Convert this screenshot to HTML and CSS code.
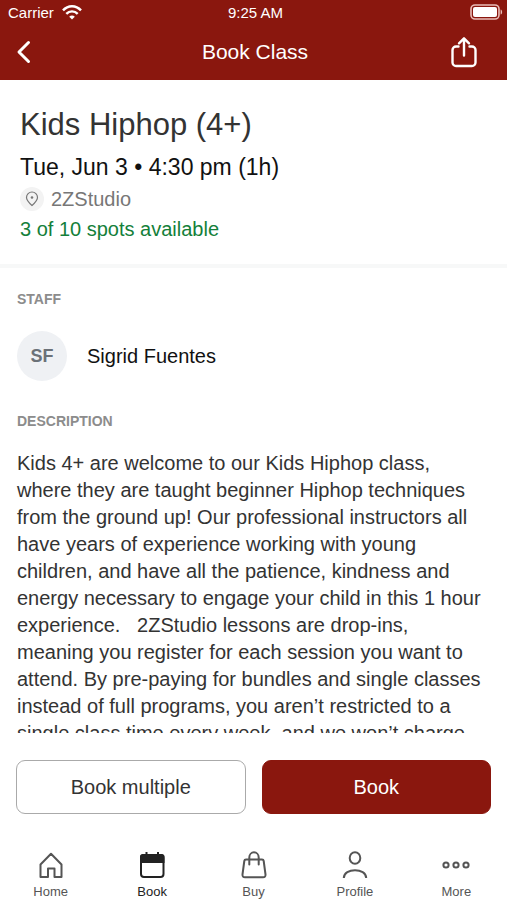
FILE: index.html
```html
<!DOCTYPE html>
<html lang="en">
<head>
  <meta charset="UTF-8">
  <meta name="viewport" content="width=device-width, initial-scale=1.0">
  <title>Book Class</title>
  <link rel="stylesheet" href="styles.css">
</head>
<body>

  <header class="header">
    <div class="status-bar">
      <div class="carrier">
        <span>Carrier</span>
        <svg width="20" height="15" viewBox="0 0 20 15" fill="none" stroke="#fff" stroke-width="2.4" aria-hidden="true">
          <path d="M1 5.4C6-.2 14-.2 19 5.4"/>
          <path d="M4.3 8.9c3.2-3.4 8.2-3.4 11.4 0"/>
          <path d="M10 14.6l-2.8-2.9c1.6-1.5 4-1.5 5.6 0z" fill="#fff" stroke="none"/>
        </svg>
      </div>
      <span class="time">9:25 AM</span>
      <svg class="battery" width="33" height="16" viewBox="0 0 33 16" aria-hidden="true">
        <rect x="1" y="1" width="28" height="14" rx="4" fill="none" stroke="#e9bdb8" stroke-width="1.6"/>
        <rect x="3" y="3" width="24" height="10" rx="2" fill="#fff"/>
        <path d="M30.6 5.4c2 .6 2 4.6 0 5.2z" fill="#e9bdb8"/>
      </svg>
    </div>
    <div class="nav-bar">
      <button type="button" class="icon-button" aria-label="Back">
        <svg width="16" height="24" viewBox="0 0 16 24" fill="none" stroke="#fff" stroke-width="3" stroke-linecap="round" stroke-linejoin="round"><path d="M12.5 2.5L3 12l9.500 9.500"/></svg>
      </button>
      <h1 class="nav-title">Book Class</h1>
      <button type="button" class="icon-button share" aria-label="Share">
        <svg width="28" height="32" viewBox="0 0 28 32" fill="none" stroke="#fff" stroke-width="2.4" stroke-linecap="round" stroke-linejoin="round">
          <path d="M8.500 10.500H6a3.500 3.500 0 0 0-3.500 3.500v12.500A3.500 3.500 0 0 0 6 30h16a3.500 3.500 0 0 0 3.500-3.500V14a3.500 3.500 0 0 0-3.500-3.500h-2.500"/>
          <path d="M14 19.500V2.500M9 7.300l5-5 5 5"/>
        </svg>
      </button>
    </div>
  </header>

  <main class="content">
    <section class="summary">
      <h2 class="class-name">Kids Hiphop (4+)</h2>
      <p class="class-time">Tue, Jun 3 • 4:30 pm (1h)</p>
      <p class="location">
        <span class="pin">
          <svg width="14" height="16" viewBox="0 0 14 16" fill="none" stroke="#777" stroke-width="1.2" aria-hidden="true">
            <path d="M7 14.500C4.200 12 1.500 9.300 1.500 6.500a5.500 5.500 0 0 1 11 0c0 2.800-2.700 5.500-5.500 8z"/>
            <circle cx="7" cy="6.500" r="1.300" fill="#777" stroke="none"/>
          </svg>
        </span>
        2ZStudio
      </p>
      <p class="spots">3 of 10 spots available</p>
    </section>

    <section class="details">
      <h3 class="section-title">STAFF</h3>
      <div class="staff">
        <span class="avatar">SF</span>
        <span>Sigrid Fuentes</span>
      </div>
      <h3 class="section-title">DESCRIPTION</h3>
      <p class="description">Kids 4+ are welcome to our Kids Hiphop class, where they are taught beginner Hiphop techniques from the ground up! Our professional instructors all have years of experience working with young children, and have all the patience, kindness and energy necessary to engage your child in this 1 hour experience. &nbsp; 2ZStudio lessons are drop-ins, meaning you register for each session you want to attend. By pre-paying for bundles and single classes instead of full programs, you aren’t restricted to a single class time every week, and we won’t charge</p>
    </section>
  </main>

  <div class="actions">
    <button type="button" class="btn">Book multiple</button>
    <button type="button" class="btn btn-primary">Book</button>
  </div>

  <nav class="tab-bar">
    <a href="#" class="tab">
      <svg width="28" height="30" viewBox="0 0 28 30" fill="none" stroke="currentColor" stroke-width="2" stroke-linejoin="round" aria-hidden="true">
        <path d="M3.500 14.500L14 3.800l10.500 10.700V27h-7v-8.500h-6.500V27H3.500z"/>
      </svg>
      Home
    </a>
    <a href="#" class="tab active" aria-current="page">
      <svg width="28" height="30" viewBox="0 0 28 30" fill="none" stroke="currentColor" stroke-width="2" aria-hidden="true">
        <rect x="3" y="5" width="22.500" height="22" rx="3"/>
        <path d="M3 6.500q0-1.500 2-1.500h18.500q2 0 2 1.500V12H3z" fill="currentColor"/>
        <path d="M8.500 2V6M20 2V6"/>
      </svg>
      Book
    </a>
    <a href="#" class="tab">
      <svg width="28" height="30" viewBox="0 0 28 30" fill="none" stroke="currentColor" stroke-width="2" stroke-linecap="round" stroke-linejoin="round" aria-hidden="true">
        <path d="M6 9.500h16q1.500 0 1.700 1.500l1.800 13.500q.2 2.800-2.500 2.800H5q-2.700 0-2.500-2.800L4.300 11Q4.500 9.500 6 9.500z"/>
        <path d="M9.300 14.500V7.500a4.700 5.200 0 0 1 9.400 0v7"/>
      </svg>
      Buy
    </a>
    <a href="#" class="tab">
      <svg width="28" height="30" viewBox="0 0 28 30" fill="none" stroke="currentColor" stroke-width="2" aria-hidden="true">
        <ellipse cx="14" cy="8" rx="5.300" ry="5.800"/>
        <path d="M2.800 28c0-10.500 22.400-10.500 22.400 0"/>
      </svg>
      Profile
    </a>
    <a href="#" class="tab">
      <svg width="28" height="30" viewBox="0 0 28 30" fill="none" stroke="currentColor" stroke-width="2" aria-hidden="true">
        <circle cx="4" cy="15" r="2.600"/>
        <circle cx="14" cy="15" r="2.600"/>
        <circle cx="24" cy="15" r="2.600"/>
      </svg>
      More
    </a>
  </nav>

</body>
</html>
```

FILE: styles.css
```css
* {
  box-sizing: border-box;
}
body {
  font-family: "Liberation Sans", Arial, sans-serif;
  font-size: 20px;
  color: #333;
  background-color: #fff;
  margin: 0;
  display: flex;
  flex-direction: column;
  height: 100vh;
}
h1, h2, h3, p {
  margin: 0;
  font-weight: normal;
}
button {
  font-family: inherit;
  cursor: pointer;
}
svg {
  display: block;
}

/* header */
.header {
  background-color: #8a170e;
  color: #fff;
}
.status-bar {
  display: grid;
  grid-template-columns: 1fr auto 1fr;
  align-items: center;
  height: 24px;
  padding: 0 4px 0 8px;
  font-size: 15px;
}
.carrier {
  display: flex;
  align-items: center;
  gap: 8px;
}
.battery {
  justify-self: end;
}
.nav-bar {
  display: grid;
  grid-template-columns: 1fr auto 1fr;
  align-items: center;
  height: 56px;
  padding: 0 25px 0 8px;
}
.nav-title {
  font-size: 21px;
  padding-left: 20px;
}
.icon-button {
  display: flex;
  justify-self: start;
  padding: 8px;
  background: none;
  border: none;
}
.share {
  justify-self: end;
  padding: 4px;
}

/* class info */
.content {
  flex: 1;
  min-height: 0;
  overflow-y: auto;
  scrollbar-width: none;
}
.summary {
  padding: 23px 20px 17px;
  border-bottom: 4px solid #f7f8f8;
}
.class-name {
  font-size: 31px;
  line-height: 44px;
}
.class-time {
  font-size: 23px;
  line-height: 40px;
  color: #111;
}
.location {
  display: flex;
  align-items: center;
  gap: 7px;
  line-height: 24px;
  color: #777;
}
.pin {
  display: flex;
  align-items: center;
  justify-content: center;
  width: 24px;
  height: 24px;
  border-radius: 50%;
  background-color: #f3f3f3;
}
.spots {
  line-height: 36px;
  color: #14803a;
}
.details {
  padding: 19px 24px 0 17px;
}
.section-title {
  font-size: 14px;
  line-height: 24px;
  font-weight: bold;
  color: #8c8c8c;
}
.staff {
  display: flex;
  align-items: center;
  gap: 20px;
  padding: 20px 0 28px;
  color: #111;
}
.avatar {
  width: 50px;
  line-height: 50px;
  border-radius: 50%;
  background-color: #eff1f4;
  text-align: center;
  font-size: 18px;
  font-weight: bold;
  color: #6b7178;
}
.description {
  padding-top: 17px;
  line-height: 27px;
}

/* buttons */
.actions {
  display: flex;
  gap: 16px;
  padding: 27px 16px 24px;
}
.btn {
  flex: 1;
  height: 54px;
  border: 1px solid #aaa;
  border-radius: 9px;
  background-color: #fff;
  color: #333;
  font-size: 20px;
}
.btn-primary {
  border-color: #8a170e;
  background-color: #8a170e;
  color: #fff;
}

/* bottom tabs */
.tab-bar {
  display: flex;
  padding: 12px 0 0;
  height: 62px;
}
.tab {
  flex: 1;
  display: flex;
  flex-direction: column;
  align-items: center;
  gap: 4px;
  font-size: 13px;
  line-height: 16px;
  color: #555;
  text-decoration: none;
}
.active {
  color: #222;
}
```
